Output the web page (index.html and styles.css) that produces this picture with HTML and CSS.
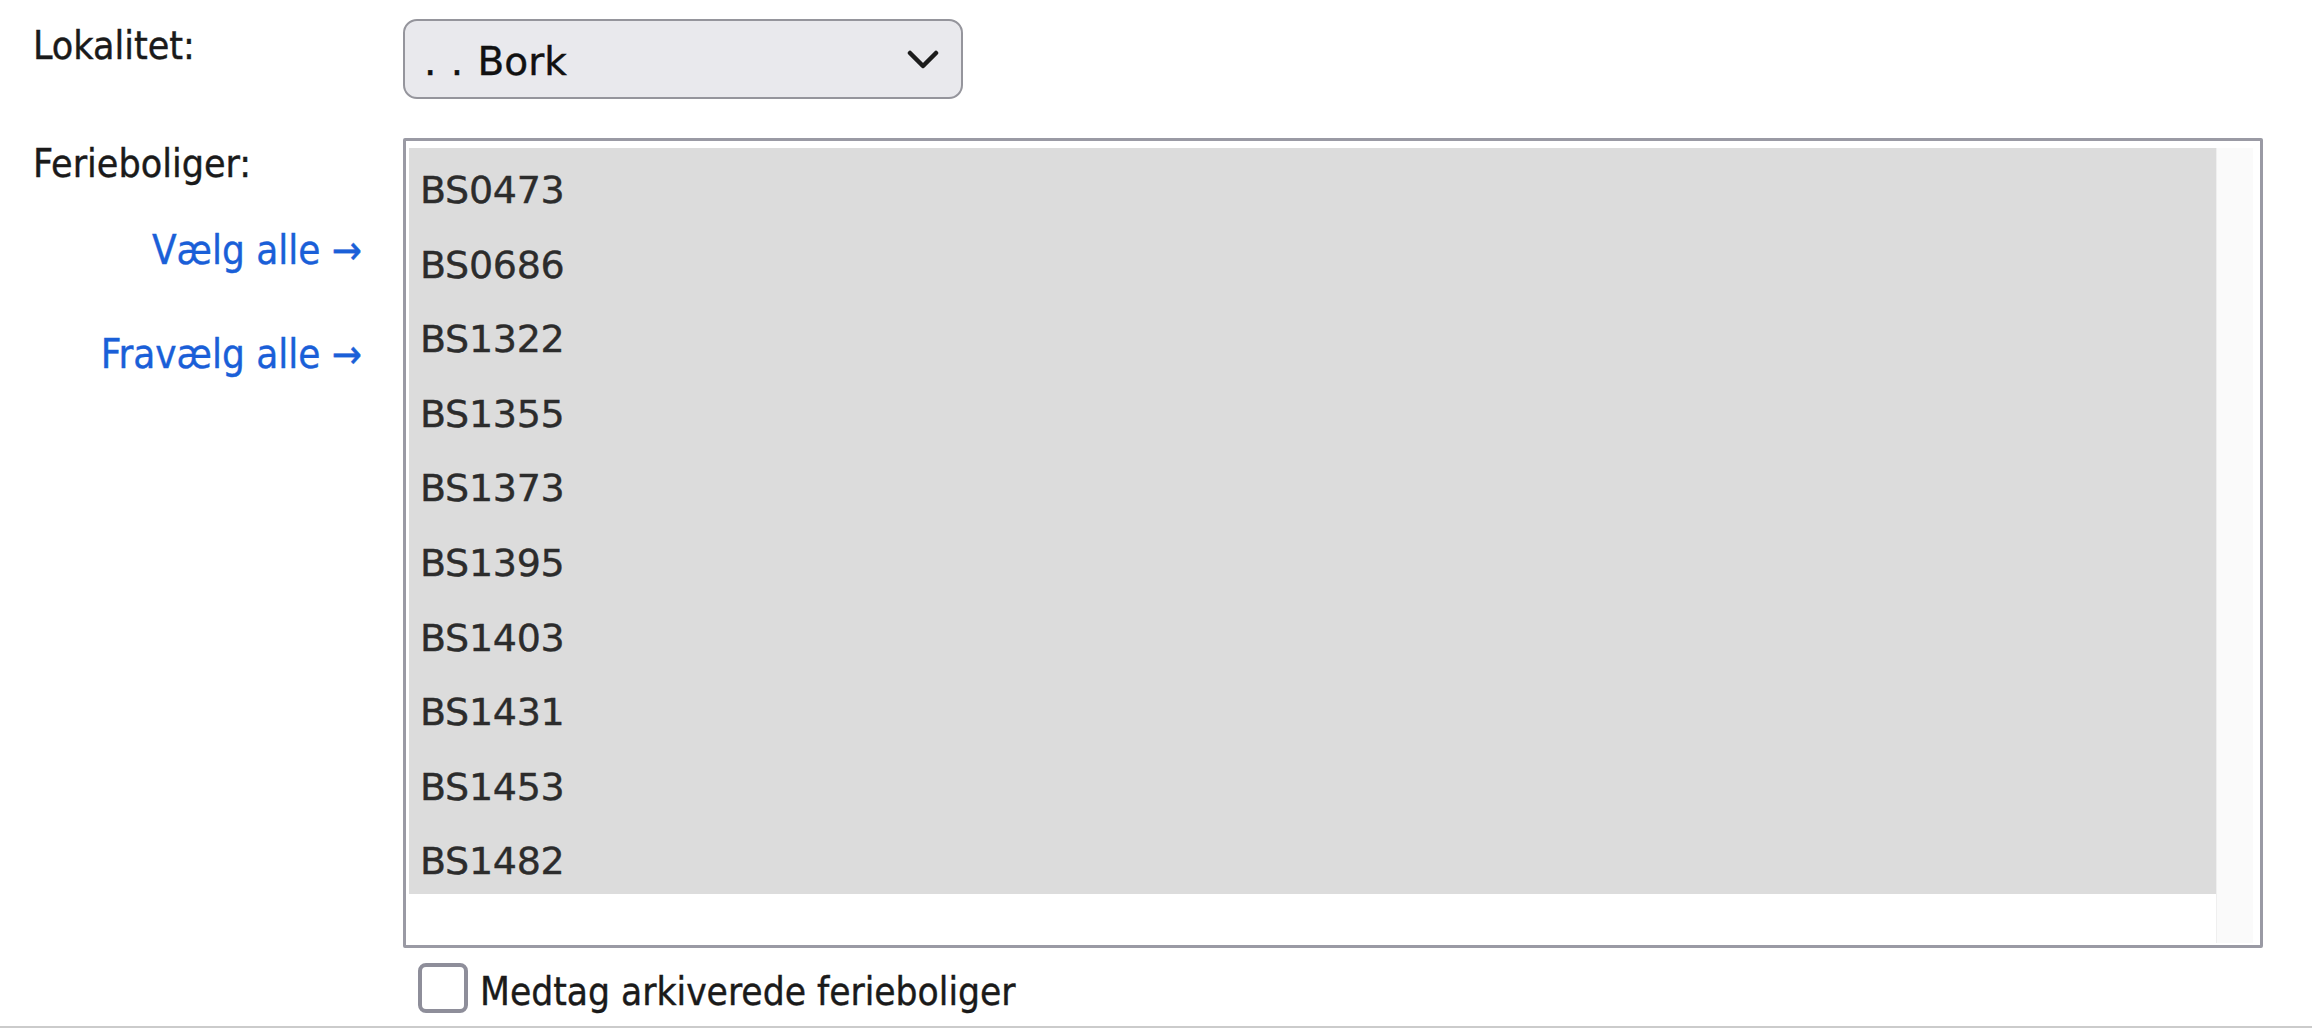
FILE: index.html
```html
<!DOCTYPE html>
<html lang="da">
<head>
<meta charset="utf-8">
<title>Ferieboliger</title>
<link rel="stylesheet" href="styles.css">
</head>
<body>
<div class="form">
  <div class="row row-loc">
    <div class="label-col">
      <span class="label">Lokalitet:</span>
    </div>
    <div class="field-col">
      <div class="select">
        <span class="select-text">. . Bork</span>
        <svg class="chevron" width="32" height="20" viewBox="0 0 32 20" aria-hidden="true">
          <path d="M3 3 L16 16 L29 3" fill="none" stroke="#1c1c1c" stroke-width="4.5" stroke-linecap="round" stroke-linejoin="round"/>
        </svg>
      </div>
    </div>
  </div>
  <div class="row row-ferie">
    <div class="label-col label-stack">
      <span class="label label-ferie">Ferieboliger:</span>
      <a class="link link-all" href="#">Vælg alle →</a>
      <a class="link link-none" href="#">Fravælg alle →</a>
    </div>
    <div class="field-col">
      <div class="listbox">
        <div class="options">
          <div class="opt">BS0473</div>
          <div class="opt">BS0686</div>
          <div class="opt">BS1322</div>
          <div class="opt">BS1355</div>
          <div class="opt">BS1373</div>
          <div class="opt">BS1395</div>
          <div class="opt">BS1403</div>
          <div class="opt">BS1431</div>
          <div class="opt">BS1453</div>
          <div class="opt">BS1482</div>
        </div>
        <div class="track"></div>
      </div>
      <label class="check">
        <span class="box"></span>
        <span class="check-text">Medtag arkiverede ferieboliger</span>
      </label>
    </div>
  </div>
</div>
<div class="bottom-line"></div>
</body>
</html>
```

FILE: styles.css
```css
html, body {
  margin: 0;
  padding: 0;
  background: #ffffff;
}

body {
  width: 2312px;
  height: 1028px;
  overflow: hidden;
  display: flex;
  flex-direction: column;
  font-family: "DejaVu Sans Condensed", "DejaVu Sans", sans-serif;
  color: #1a1a1a;
  -webkit-text-stroke: 0.4px currentColor;
}

.form {
  display: flex;
  flex-direction: column;
  padding-top: 19px;
  gap: 39px;
}

.row {
  display: grid;
  grid-template-columns: 403px 1fr;
}

.label-col {
  padding-left: 33px;
  padding-right: 41px;
}

.label {
  display: block;
  font-size: 39px;
  line-height: 48px;
  padding-top: 3px;
}

.label-stack {
  display: flex;
  flex-direction: column;
}

.label-ferie {
  padding-top: 2px;
}

.link {
  align-self: flex-end;
  font-size: 40px;
  line-height: 48px;
  color: #1a5fd8;
  text-decoration: none;
}

.link-all {
  margin-top: 38px;
}

.link-none {
  margin-top: 56px;
}

.field-col {
  display: flex;
  flex-direction: column;
  align-items: flex-start;
}

/* select */
.select {
  box-sizing: border-box;
  width: 560px;
  height: 80px;
  border: 2px solid #95959c;
  border-radius: 14px;
  background: #e9e9ed;
  display: flex;
  align-items: center;
  justify-content: space-between;
  padding: 0 22px 0 19px;
}

.select-text {
  font-family: "DejaVu Sans", sans-serif;
  font-size: 39px;
  line-height: 48px;
  padding-top: 6px;
  word-spacing: 2px;
  color: #111111;
}

.chevron {
  display: block;
  margin-top: 2px;
}

/* listbox */
.listbox {
  box-sizing: border-box;
  width: 1860px;
  height: 810px;
  border: 3px solid #9a9aa4;
  border-radius: 2px;
  background: #ffffff;
  display: flex;
  padding: 7px 7px 2px 3px;
}

.options {
  flex: 1;
  display: flex;
  flex-direction: column;
}

.opt {
  background: #dcdcdc;
  height: 64.6px;
  padding: 10px 0 0 11px;
  font-family: "DejaVu Sans", sans-serif;
  font-size: 38px;
  line-height: 64.6px;
  color: #2c2c2c;
  letter-spacing: -0.3px;
}

.track {
  width: 36px;
  background: #fafafa;
  border-left: 1px solid #efefef;
}

/* checkbox */
.check {
  display: flex;
  align-items: flex-start;
  margin-top: 15px;
  margin-left: 15px;
  gap: 12px;
}

.box {
  box-sizing: border-box;
  width: 50px;
  height: 50px;
  border: 4px solid #8e8e9a;
  border-radius: 8px;
  background: #ffffff;
}

.check-text {
  font-size: 38.5px;
  line-height: 48px;
  padding-top: 5px;
  color: #1a1a1a;
}

.bottom-line {
  margin-top: auto;
  height: 2px;
  background: #cbcbcb;
}
```
